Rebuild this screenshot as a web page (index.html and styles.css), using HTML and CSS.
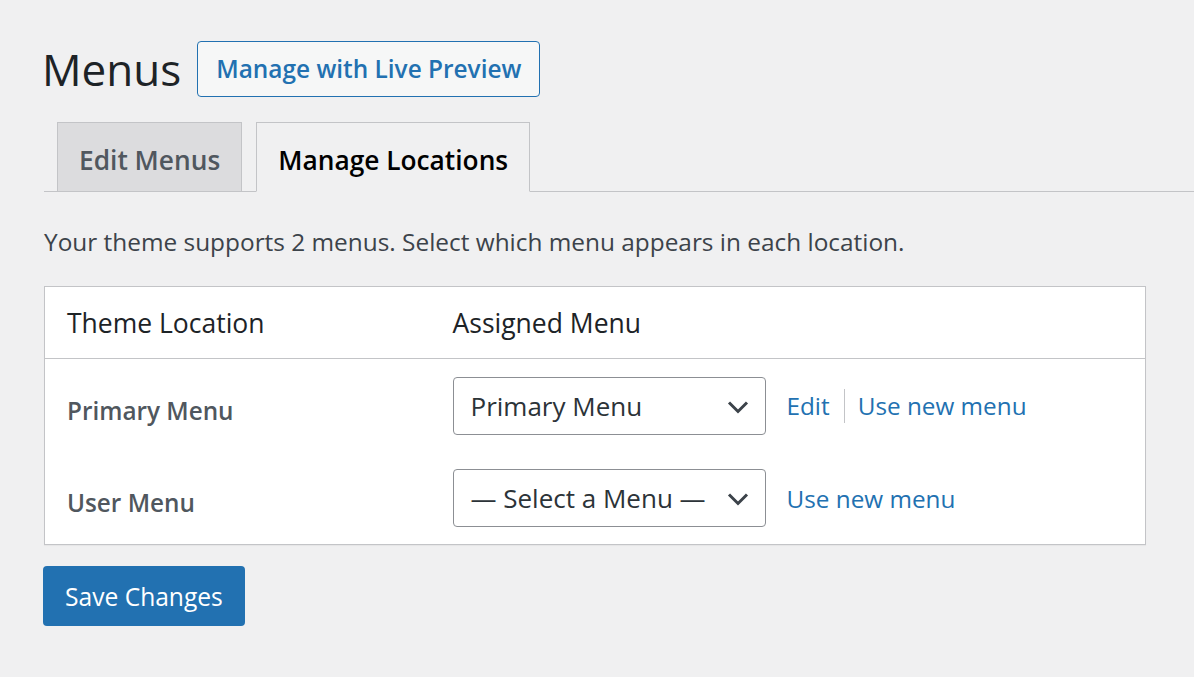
FILE: index.html
```html
<!DOCTYPE html>
<html lang="en">
<head>
    <meta charset="UTF-8">
    <meta name="viewport" content="width=device-width, initial-scale=1.0">
    <title>Menus</title>
    <link rel="stylesheet" href="styles.css">
</head>
<body>
    <div class="wrap">
        <div class="title-row">
            <h1>Menus</h1>
            <a href="#" class="title-action">Manage with Live Preview</a>
        </div>

        <nav class="nav-tabs">
            <a href="#" class="nav-tab">Edit Menus</a>
            <a href="#" class="nav-tab active">Manage Locations</a>
        </nav>

        <p class="desc">Your theme supports 2 menus. Select which menu appears in each location.</p>

        <table class="locations">
            <thead>
                <tr>
                    <th class="col-location">Theme Location</th>
                    <th>Assigned Menu</th>
                </tr>
            </thead>
            <tbody>
                <tr>
                    <th class="row-label">Primary Menu</th>
                    <td>
                        <div class="menu-cell">
                            <div class="select">
                                <span>Primary Menu</span>
                                <svg class="chevron" width="22" height="14" viewBox="0 0 22 14"><path d="M2 2.5l9 9 9-9" fill="none" stroke="#3c434a" stroke-width="3"/></svg>
                            </div>
                            <a href="#" class="link">Edit</a>
                            <span class="sep"></span>
                            <a href="#" class="link">Use new menu</a>
                        </div>
                    </td>
                </tr>
                <tr>
                    <th class="row-label">User Menu</th>
                    <td>
                        <div class="menu-cell">
                            <div class="select">
                                <span>&mdash; Select a Menu &mdash;</span>
                                <svg class="chevron" width="22" height="14" viewBox="0 0 22 14"><path d="M2 2.5l9 9 9-9" fill="none" stroke="#3c434a" stroke-width="3"/></svg>
                            </div>
                            <a href="#" class="link">Use new menu</a>
                        </div>
                    </td>
                </tr>
            </tbody>
        </table>

        <button class="btn-primary">Save Changes</button>
    </div>
</body>
</html>
```

FILE: styles.css
```css
* {
    box-sizing: border-box;
    margin: 0;
    padding: 0;
}

body {
    background-color: #f0f0f1;
    font-family: "Open Sans", "Noto Sans", sans-serif;
    color: #3c434a;
}

a {
    text-decoration: none;
}

.wrap {
    padding: 40px 0 0 44px;
}

.title-row {
    display: flex;
    align-items: center;
    gap: 16px;
    height: 57px;
}

h1 {
    font-size: 44px;
    font-weight: 400;
    color: #1d2327;
    line-height: 1;
    margin-left: -2px;
}

.title-action {
    display: inline-block;
    height: 56px;
    line-height: 53px;
    padding: 0 18px;
    border: 1px solid #2271b1;
    border-radius: 4px;
    background-color: #f6f7f7;
    color: #2271b1;
    font-size: 24.4px;
    font-weight: 600;
}

.nav-tabs {
    display: flex;
    align-items: flex-end;
    margin-top: 25px;
    border-bottom: 1px solid #c3c4c7;
    padding-left: 13px;
}

.nav-tab {
    display: block;
    height: 70px;
    line-height: 74px;
    padding: 0 21px;
    margin-right: 14px;
    margin-bottom: -1px;
    border: 1px solid #c3c4c7;
    background-color: #dcdcde;
    color: #50575e;
    font-size: 26.3px;
    font-weight: 600;
}

.nav-tab.active {
    background-color: #f0f0f1;
    border-bottom-color: #f0f0f1;
    color: #000;
}

.desc {
    font-size: 24.4px;
    margin-top: 36px;
    line-height: 28px;
}

.locations {
    margin: 30px 48px 0 0;
    width: calc(100% - 48px);
    background-color: #fff;
    border: 1px solid #c3c4c7;
    border-collapse: collapse;
    box-shadow: 0 1px 1px rgba(0, 0, 0, 0.04);
}

.locations thead th {
    height: 72px;
    padding: 0 22px;
    text-align: left;
    font-size: 26.5px;
    font-weight: 400;
    color: #1d2327;
    border-bottom: 1px solid #c3c4c7;
}

.col-location {
    width: 386px;
}

.locations tbody tr {
    height: 93px;
}

.row-label {
    text-align: left;
    padding: 10px 22px 0;
    font-size: 24.3px;
    font-weight: 600;
    color: #50575e;
}

.locations td {
    padding: 1px 22px 0;
    vertical-align: middle;
}

.menu-cell {
    display: flex;
    align-items: center;
}

.select {
    display: flex;
    align-items: center;
    justify-content: space-between;
    width: 313px;
    height: 58px;
    padding: 0 16px 0 17px;
    border: 1px solid #8c8f94;
    border-radius: 4px;
    background-color: #fff;
    font-size: 26px;
    color: #2c3338;
}

.chevron {
    margin-top: 2px;
}

.link {
    font-size: 24.3px;
    color: #2271b1;
    margin-left: 21px;
}

.sep {
    width: 1px;
    height: 34px;
    background-color: #c3c4c7;
    margin-left: 14px;
}

.sep + .link {
    margin-left: 13px;
}

.btn-primary {
    display: block;
    margin-top: 21px;
    margin-left: -1px;
    height: 60px;
    padding: 0 22px;
    border: none;
    border-radius: 4px;
    background-color: #2271b1;
    color: #fff;
    font-family: inherit;
    font-size: 24.6px;
}
```
